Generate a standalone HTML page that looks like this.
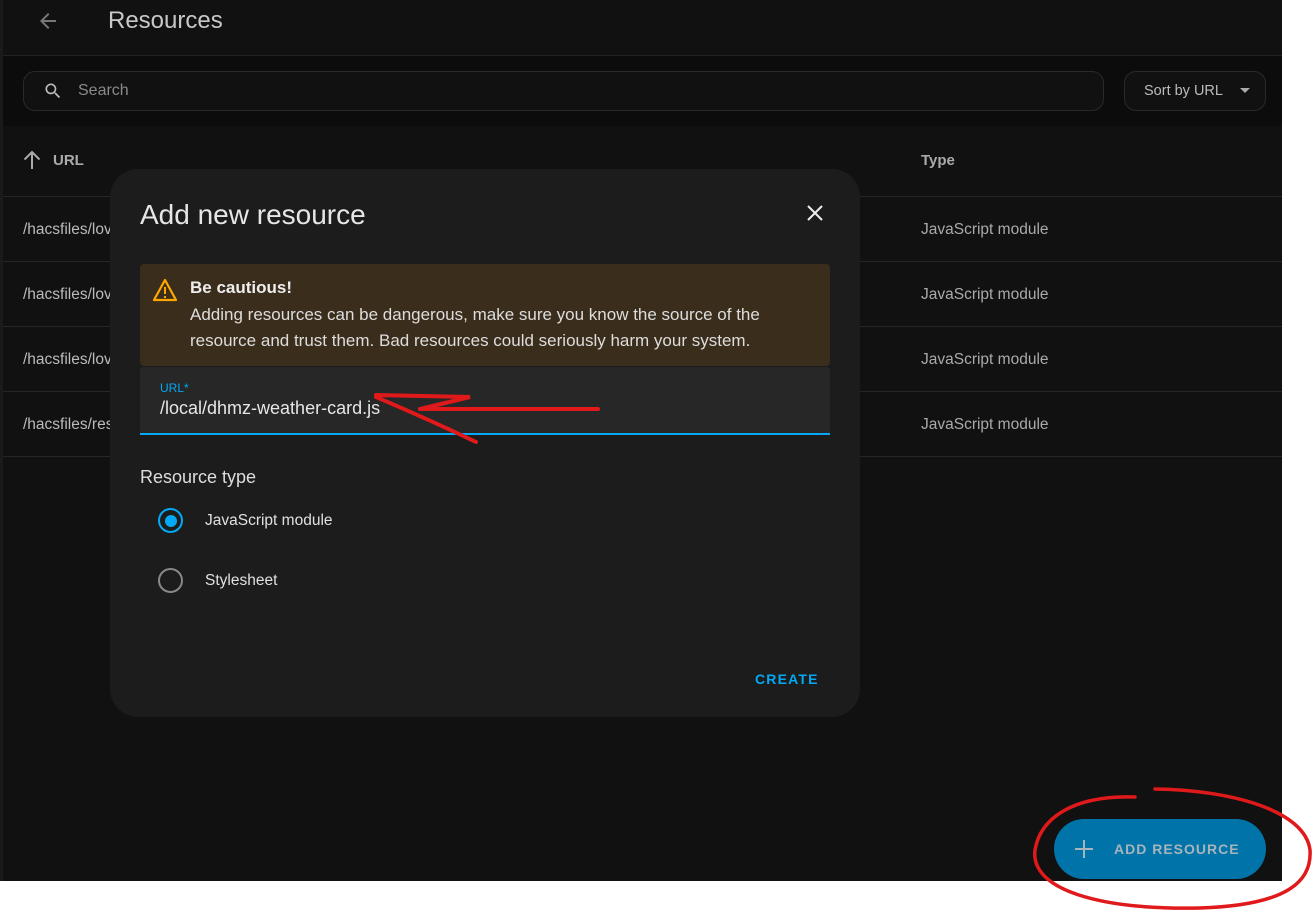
<!DOCTYPE html>
<html><head><meta charset="utf-8"><style>
*{box-sizing:border-box;margin:0;padding:0}
body{width:1315px;height:912px;background:#fff;font-family:"Liberation Sans",sans-serif;position:relative;overflow:hidden}
.app{position:absolute;left:0;top:0;width:1282px;height:881px;background:#111;box-shadow:inset 3px 0 #1a1a1a}
.hdr{position:absolute;left:3px;top:0;width:1279px;height:56px;border-bottom:1px solid #222;background:#111}
.hdr .t{position:absolute;left:105px;top:7px;font-size:24px;color:#c8c8c8}
.bar{position:absolute;left:3px;top:56px;width:1279px;height:70px;background:#0c0c0c}
.search{position:absolute;left:20px;top:15px;width:1081px;height:40px;border:1px solid #2a2a2a;border-radius:12px;background:#111}
.search span{position:absolute;left:54px;top:10px;font-size:16px;color:#8a8a8a}
.sort{position:absolute;left:1121px;top:15px;width:142px;height:40px;border:1px solid #2a2a2a;border-radius:12px;background:#111}
.sort span{position:absolute;left:19px;top:11px;font-size:14.5px;color:#bbb}
.th{position:absolute;top:152px;font-size:15px;font-weight:bold;color:#aaa}
.row{position:absolute;left:3px;width:1279px;height:65px;border-top:1px solid #262626}
.row .u{position:absolute;left:20px;top:24px;font-size:15.5px;color:#bbb}
.row .ty{position:absolute;left:918px;top:24px;font-size:15.5px;color:#aaa}
.modal{position:absolute;left:110px;top:169px;width:750px;height:548px;background:#1c1c1c;border-radius:28px}
.modal h2{position:absolute;left:30px;top:30px;font-size:28px;font-weight:normal;color:#e6e6e6}
.warn{position:absolute;left:30px;top:95px;width:690px;height:102px;background:#3a2d1c;border-radius:4px}
.warn b{position:absolute;left:50px;top:14px;font-size:17px;color:#eee}
.warn p{position:absolute;left:50px;top:38px;width:635px;font-size:17px;line-height:26px;color:#ddd}
.field{position:absolute;left:30px;top:198px;width:690px;height:68px;background:#272727;border-bottom:2px solid #03a9f4;border-radius:4px 4px 0 0}
.field .l{position:absolute;left:20px;top:14px;font-size:12px;color:#03a9f4}
.field .v{position:absolute;left:20px;top:31px;font-size:18px;color:#e6e6e6}
.rt{position:absolute;left:30px;top:298px;font-size:18px;color:#ddd}
.radio{position:absolute;left:48px;width:25px;height:25px;border-radius:50%;border:2px solid #888}
.rl{position:absolute;left:95px;font-size:15.5px;color:#e0e0e0}
.create{position:absolute;left:645px;top:502px;font-size:14px;font-weight:bold;letter-spacing:1.2px;color:#03a9f4}
.fab{position:absolute;left:1054px;top:819px;width:212px;height:60px;border-radius:30px;background:#0074a8}
.fab span{position:absolute;left:60px;top:22px;font-size:14px;font-weight:bold;letter-spacing:1px;color:#a8b4bb}
</style></head><body>
<div class="app">
 <div class="hdr">
  <svg style="position:absolute;left:33px;top:9px" width="24" height="24" viewBox="0 0 24 24"><path d="M20 11H7.8l5.6-5.6L12 4l-8 8 8 8 1.4-1.4L7.8 13H20z" fill="#777"/></svg>
  <div class="t">Resources</div>
 </div>
 <div class="bar">
  <div class="search"><svg style="position:absolute;left:19px;top:9px" width="20" height="20" viewBox="0 0 24 24"><path d="M9.5 3A6.5 6.5 0 0 1 16 9.5c0 1.6-.6 3.1-1.6 4.2l.3.3h.8l5 5-1.5 1.5-5-5v-.8l-.3-.3A6.5 6.5 0 1 1 9.5 3m0 2C7 5 5 7 5 9.5S7 14 9.5 14 14 12 14 9.5 12 5 9.5 5z" fill="#bbb"/></svg><span>Search</span></div>
  <div class="sort"><span>Sort by URL</span><svg style="position:absolute;left:114px;top:15px" width="12" height="8"><path d="M1 1h10L6 6z" fill="#aaa"/></svg></div>
 </div>
 <svg style="position:absolute;left:20px;top:148px" width="24" height="24" viewBox="0 0 24 24"><path d="M12 21V4M4.5 11.5 12 4l7.5 7.5" stroke="#aaa" stroke-width="2" fill="none"/></svg>
 <div class="th" style="left:53px">URL</div>
 <div class="th" style="left:921px">Type</div>
 <div class="row" style="top:196px"><div class="u">/hacsfiles/lovelace</div><div class="ty">JavaScript module</div></div>
 <div class="row" style="top:261px"><div class="u">/hacsfiles/lovelace</div><div class="ty">JavaScript module</div></div>
 <div class="row" style="top:326px"><div class="u">/hacsfiles/lovelace</div><div class="ty">JavaScript module</div></div>
 <div class="row" style="top:391px"><div class="u">/hacsfiles/resource</div><div class="ty">JavaScript module</div></div>
 <div class="row" style="top:456px;height:1px"></div>
 <div class="modal">
  <h2>Add new resource</h2>
  <svg style="position:absolute;left:695px;top:34px" width="20" height="20" viewBox="0 0 20 20"><path d="M3 3l14 14M17 3 3 17" stroke="#eee" stroke-width="2"/></svg>
  <div class="warn">
   <svg style="position:absolute;left:12px;top:14px" width="26" height="24" viewBox="0 0 26 24"><path d="M13 2 2 22h22z" stroke="#ffa600" stroke-width="2.2" fill="none" stroke-linejoin="round"/><path d="M13 9v7M13 18v2" stroke="#ffa600" stroke-width="2"/></svg>
   <b>Be cautious!</b>
   <p>Adding resources can be dangerous, make sure you know the source of the resource and trust them. Bad resources could seriously harm your system.</p>
  </div>
  <div class="field"><div class="l">URL*</div><div class="v">/local/dhmz-weather-card.js</div></div>
  <div class="rt">Resource type</div>
  <div class="radio" style="top:339px;border-color:#03a9f4"><div style="position:absolute;left:4.5px;top:4.5px;width:12px;height:12px;border-radius:50%;background:#03a9f4"></div></div>
  <div class="rl" style="top:343px">JavaScript module</div>
  <div class="radio" style="top:399px"></div>
  <div class="rl" style="top:403px">Stylesheet</div>
  <div class="create">CREATE</div>
 </div>
 <div class="fab"><svg style="position:absolute;left:19px;top:19px" width="22" height="22"><path d="M11 2v18M2 11h18" stroke="#a8b4bb" stroke-width="2"/></svg><span>ADD RESOURCE</span></div>
</div>
<svg style="position:absolute;left:0;top:0" width="1315" height="912">
 <path d="M376 397 Q430 420 476 442 M420 409 L470 397 L376 395 M420 409 L598 409" stroke="#e0191b" stroke-width="4" fill="none" stroke-linecap="round"/>
 <path d="M1135 797 C1070 795 1040 820 1035 850 C1030 890 1100 910 1200 908 C1290 905 1312 880 1310 850 C1305 810 1230 790 1155 789" stroke="#e0191b" stroke-width="3.5" fill="none" stroke-linecap="round"/>
</svg>
</body></html>
